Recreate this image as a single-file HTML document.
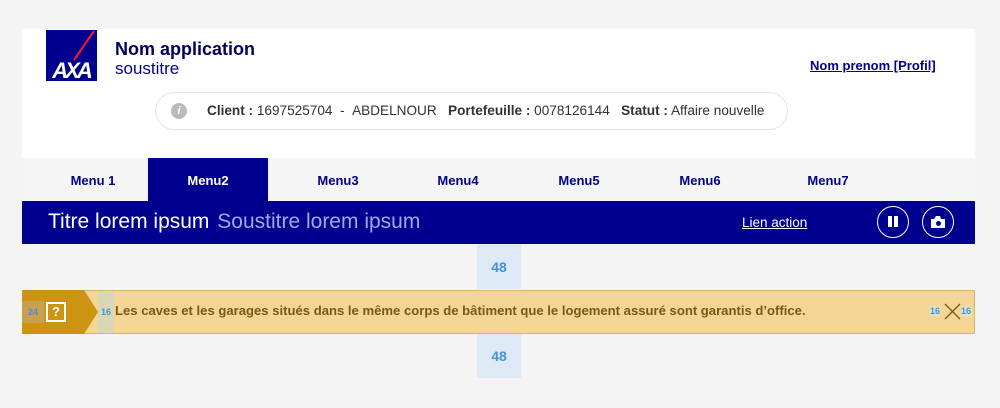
<!DOCTYPE html>
<html><head><meta charset="utf-8"><style>
*{margin:0;padding:0;box-sizing:border-box}
body{width:1000px;height:408px;background:#f4f4f4;font-family:"Liberation Sans",sans-serif;position:relative;overflow:hidden}
.a{position:absolute}
.hdr{left:22px;top:29px;width:953px;height:129px;background:#fff}
.menu{left:22px;top:158px;width:953px;height:43px;background:#f5f5f5}
.mi{top:158px;height:43px;line-height:46px;font-size:13px;font-weight:bold;color:#00008f;text-align:center;width:120px}
.title{left:22px;top:201px;width:953px;height:43px;background:#00008f}
.b48{left:477px;width:44px;height:44px;background:#dde9f4;color:#4a90d9;font-weight:bold;font-size:14px;text-align:center;line-height:44px}
.circ{width:32px;height:32px;border:1.5px solid #fff;border-radius:50%;top:206px}
</style></head><body>
<div class="a hdr"></div>
<svg class="a" style="left:46px;top:30px" width="51" height="51" viewBox="0 0 51 51">
<rect width="51" height="51" fill="#00008f"/>
<line x1="48" y1="1" x2="28" y2="30" stroke="#ff1721" stroke-width="2"/>
<text x="25" y="48" fill="#fff" font-family="Liberation Sans" font-weight="bold" font-size="22" text-anchor="middle" font-style="italic" letter-spacing="-3">AXA</text>
</svg>
<div class="a" style="left:115px;top:39px;font-size:18px;font-weight:bold;color:#00005b">Nom application</div>
<div class="a" style="left:115px;top:59px;font-size:17px;color:#00008f">soustitre</div>
<div class="a" style="left:810px;top:58px;font-size:13px;font-weight:bold;color:#00008f;text-decoration:underline">Nom prenom [Profil]</div>
<div class="a" style="left:155px;top:92px;width:633px;height:38px;border:1px solid #e5e5e5;border-radius:19px;background:#fff"></div>
<div class="a" style="left:171px;top:103px;width:16px;height:16px;border-radius:50%;background:#bbb;color:#fff;font-size:11px;font-weight:bold;font-style:italic;text-align:center;line-height:16px">i</div>
<div class="a" style="left:207px;top:103px;font-size:13.6px;color:#333;white-space:nowrap"><b>Client :</b> 1697525704 &nbsp;- &nbsp;ABDELNOUR &nbsp; <b>Portefeuille :</b> 0078126144 &nbsp; <b>Statut :</b> Affaire nouvelle</div>
<div class="a menu"></div>
<div class="a" style="left:148px;top:158px;width:120px;height:43px;background:#00008f"></div>
<div class="a mi" style="left:33px">Menu 1</div>
<div class="a mi" style="left:148px;color:#fff">Menu2</div>
<div class="a mi" style="left:278px">Menu3</div>
<div class="a mi" style="left:398px">Menu4</div>
<div class="a mi" style="left:519px">Menu5</div>
<div class="a mi" style="left:640px">Menu6</div>
<div class="a mi" style="left:768px">Menu7</div>
<div class="a title"></div>
<div class="a" style="left:48px;top:210px;font-size:21px;color:#fff;white-space:nowrap">Titre lorem ipsum <span style="color:#9fa8e8;margin-left:2px">Soustitre lorem ipsum</span></div>
<div class="a" style="left:742px;top:215px;font-size:13.5px;color:#fff;text-decoration:underline">Lien action</div>
<div class="a circ" style="left:877px"><div class="a" style="left:10px;top:9px;width:4px;height:11px;background:#fff"></div><div class="a" style="left:16px;top:9px;width:4px;height:11px;background:#fff"></div></div>
<div class="a circ" style="left:922px"><svg class="a" style="left:7px;top:8px" width="16" height="14" viewBox="0 0 16 14"><path d="M1 4h3l2-3h4l1 3h4v9H1z" fill="#fff"/><circle cx="8.5" cy="8.5" r="2.5" fill="#00008f"/></svg></div>
<div class="a b48" style="top:245px">48</div>
<div class="a" style="left:22px;top:290px;width:953px;height:44px;background:#f3d595;border:1px solid #d9b66d"></div>
<svg class="a" style="left:22px;top:290px" width="76" height="44"><path d="M0 0H62L76 22L62 44H0Z" fill="#cd9312"/></svg>
<div class="a" style="left:22px;top:301px;width:22px;height:22px;background:#c9a14e;color:#4a90d9;font-size:9px;font-weight:bold;line-height:22px;text-align:center">24</div>
<div class="a" style="left:46px;top:302px;width:20px;height:20px;border:2px solid #fff;color:#fff;font-weight:bold;font-size:13px;text-align:center;line-height:16px">?</div>
<div class="a" style="left:98px;top:291px;width:16px;height:42px;background:#d9d8b4;color:#4a90d9;font-size:9px;font-weight:bold;line-height:42px;text-align:center">16</div>
<div class="a" style="left:115px;top:303px;font-size:13.1px;font-weight:bold;color:#7a5a12;white-space:nowrap">Les caves et les garages situés dans le même corps de bâtiment que le logement assuré sont garantis d’office.</div>
<div class="a" style="left:930px;top:306px;font-size:9px;font-weight:bold;color:#4a90d9;background:#dfe3c8">16</div>
<svg class="a" style="left:944px;top:303px" width="17" height="17"><path d="M1 1L16 16M16 1L1 16" stroke="#7a5a12" stroke-width="1.3"/></svg>
<div class="a" style="left:961px;top:306px;font-size:9px;font-weight:bold;color:#4a90d9;background:#dfe3c8">16</div>
<div class="a b48" style="top:334px">48</div>
</body></html>
